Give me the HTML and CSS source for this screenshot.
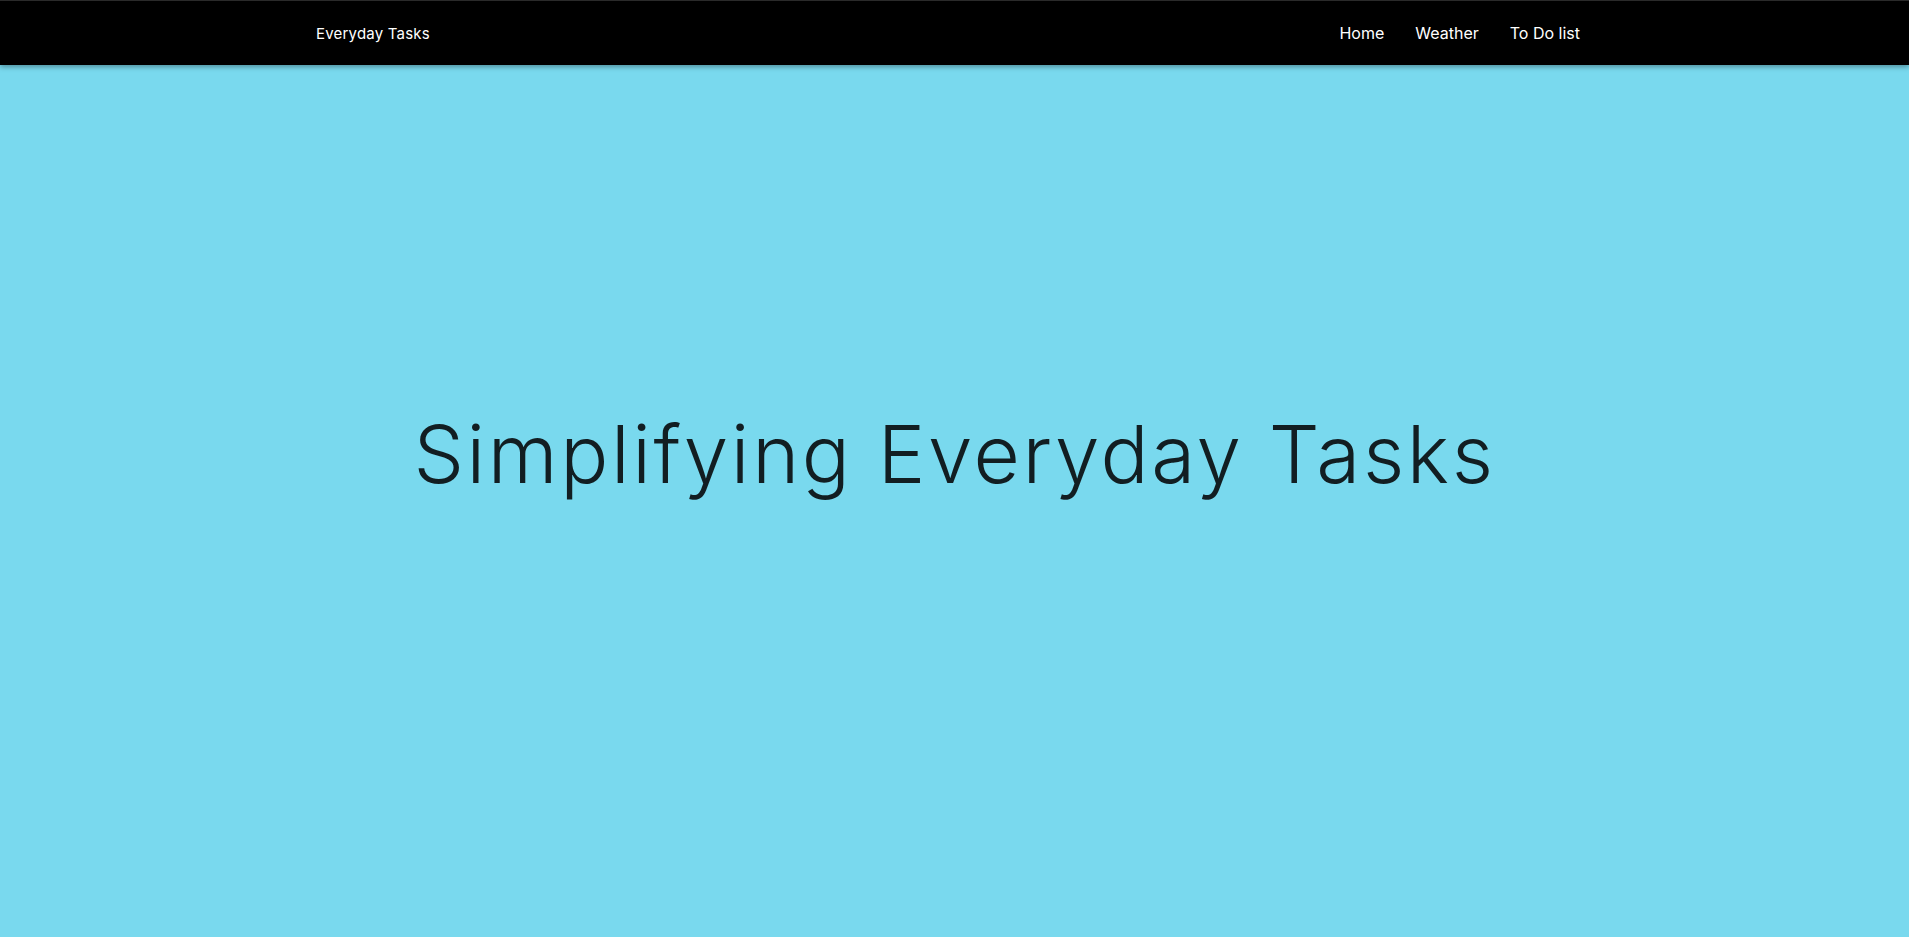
FILE: index.html
```html
<!DOCTYPE html>
<html lang="en">
<head>
<meta charset="utf-8">
<title>Everyday Tasks</title>
<link rel="stylesheet" href="styles.css">
</head>
<body>
<nav class="navbar">
  <div class="nav-inner">
    <a class="brand" href="#">Everyday Tasks</a>
    <ul class="nav-links">
      <li><a href="#">Home</a></li>
      <li><a href="#">Weather</a></li>
      <li><a href="#">To Do list</a></li>
    </ul>
  </div>
</nav>
<main class="hero">
  <h1 class="hero-title">Simplifying Everyday Tasks</h1>
</main>
</body>
</html>
```
FILE: styles.css
```css
html, body {
  margin: 0;
  padding: 0;
}
body {
  font-family: "Inter", "DejaVu Sans", sans-serif;
  background: #79d9ee;
  overflow: hidden;
}
.navbar {
  background: #000;
  border-top: 1px solid #2a2a2a;
  height: 64px;
  box-shadow: 0 2px 5px rgba(0,0,0,0.35);
  position: relative;
  z-index: 2;
}
.nav-inner {
  height: 100%;
  display: flex;
  align-items: center;
  justify-content: space-between;
  padding: 0 329px 0 316px;
}
.brand {
  color: #fff;
  text-decoration: none;
  font-size: 15px;
  font-weight: 400;
  letter-spacing: 0.2px;
}
.nav-links {
  display: flex;
  gap: 31px;
  list-style: none;
  margin: 0;
  padding: 0;
}
.nav-links a {
  color: #fff;
  text-decoration: none;
  font-size: 16px;
  letter-spacing: 0;
}
.hero {
  height: 872px;
  display: flex;
  align-items: center;
  justify-content: center;
  padding-bottom: 94px;
  box-sizing: border-box;
}
.hero-title {
  margin: 0;
  font-size: 80px;
  font-weight: 300;
  line-height: 1.2;
  color: #121e22;
  letter-spacing: 2.6px;
}
```
